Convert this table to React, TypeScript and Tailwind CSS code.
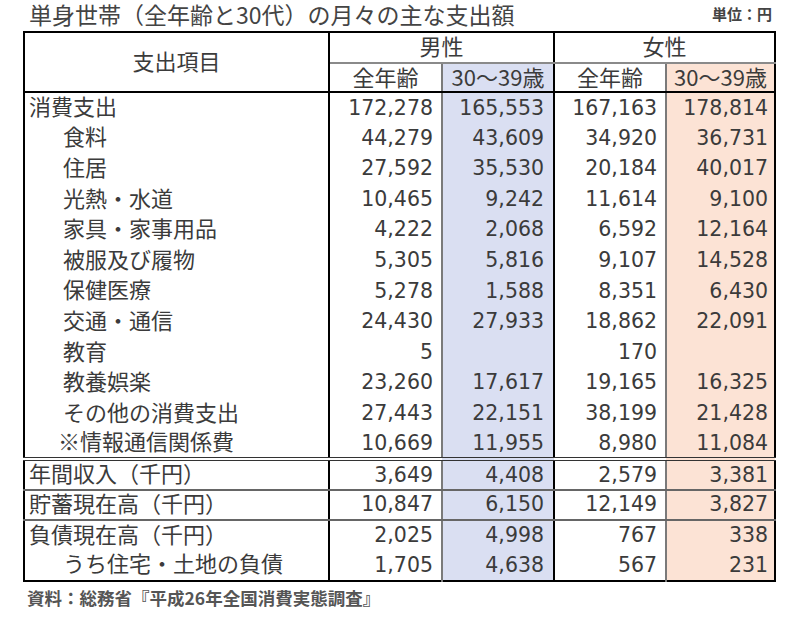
import React from "react";

type Row = {
  label: string;
  indent?: number;
  v: [string, string, string, string];
};

const rows: Row[] = [
  { label: "消費支出", v: ["172,278", "165,553", "167,163", "178,814"] },
  { label: "食料", indent: 1, v: ["44,279", "43,609", "34,920", "36,731"] },
  { label: "住居", indent: 1, v: ["27,592", "35,530", "20,184", "40,017"] },
  { label: "光熱・水道", indent: 1, v: ["10,465", "9,242", "11,614", "9,100"] },
  { label: "家具・家事用品", indent: 1, v: ["4,222", "2,068", "6,592", "12,164"] },
  { label: "被服及び履物", indent: 1, v: ["5,305", "5,816", "9,107", "14,528"] },
  { label: "保健医療", indent: 1, v: ["5,278", "1,588", "8,351", "6,430"] },
  { label: "交通・通信", indent: 1, v: ["24,430", "27,933", "18,862", "22,091"] },
  { label: "教育", indent: 1, v: ["5", "", "170", ""] },
  { label: "教養娯楽", indent: 1, v: ["23,260", "17,617", "19,165", "16,325"] },
  { label: "その他の消費支出", indent: 1, v: ["27,443", "22,151", "38,199", "21,428"] },
  { label: "※情報通信関係費", indent: 2, v: ["10,669", "11,955", "8,980", "11,084"] },
];

const rows2: Row[] = [
  { label: "年間収入（千円）", v: ["3,649", "4,408", "2,579", "3,381"] },
  { label: "貯蓄現在高（千円）", v: ["10,847", "6,150", "12,149", "3,827"] },
  { label: "負債現在高（千円）", v: ["2,025", "4,998", "767", "338"] },
  { label: "うち住宅・土地の負債", indent: 1, v: ["1,705", "4,638", "567", "231"] },
];

const BLUE = "bg-[#dadff2]";
const PEACH = "bg-[#fce3d5]";
const JP = { fontFamily: '"Noto Sans CJK JP", sans-serif' };

function DataRow({ r, h, bottom }: { r: Row; h: string; bottom: string }) {
  const pad = r.indent === 1 ? "pl-[38px]" : r.indent === 2 ? "pl-[33px]" : "pl-[4px]";
  return (
    <tr className={h}>
      <td className={`${pad} pb-[5px] border-r-2 border-black ${bottom} whitespace-nowrap text-[22px]`} style={JP}>
        {r.label}
      </td>
      <td className={`pr-[8px] text-right border-r-2 border-[#7a7a7a] ${bottom}`}>{r.v[0]}</td>
      <td className={`pr-[9px] text-right border-r-2 border-black ${BLUE} ${bottom}`}>{r.v[1]}</td>
      <td className={`pr-[8px] text-right border-r-2 border-[#7a7a7a] ${bottom}`}>{r.v[2]}</td>
      <td className={`pr-[6px] text-right ${PEACH} ${bottom}`}>{r.v[3]}</td>
    </tr>
  );
}

export default function App() {
  return (
    <div
      className="w-[800px] h-[622px] bg-white text-[#3b3b3b] overflow-hidden"
      style={{ fontFamily: '"DejaVu Sans", "Noto Sans CJK JP", sans-serif' }}
    >
      <div className="flex items-start justify-between h-[31px] pl-[29px] pr-[28px]">
        <div className="text-[23px] leading-[28px] text-[#444]" style={JP}>
          単身世帯（全年齢と30代）の月々の主な支出額
        </div>
        <div className="text-[15px] font-bold leading-[28px] text-[#444]" style={JP}>
          単位：円
        </div>
      </div>
      <table className="ml-[23px] w-[751px] table-fixed border-collapse border-2 border-black text-[20.5px] leading-none">
        <colgroup>
          <col className="w-[305px]" />
          <col className="w-[113px]" />
          <col className="w-[112px]" />
          <col className="w-[112px]" />
          <col className="w-[109px]" />
        </colgroup>
        <tbody>
          <tr className="h-[31px]">
            <td rowSpan={2} className="text-center pb-[5px] border-r-2 border-b-2 border-black text-[22px]" style={JP}>
              支出項目
            </td>
            <td colSpan={2} className="text-center pb-[5px] border-r-2 border-black border-b-2 border-b-[#8a8a8a] text-[22px]" style={JP}>
              男性
            </td>
            <td colSpan={2} className="text-center pb-[5px] border-b-2 border-b-[#8a8a8a] text-[22px]" style={JP}>
              女性
            </td>
          </tr>
          <tr className="h-[29px] text-[22px]">
            <td className="text-center pb-[4px] border-r-2 border-[#7a7a7a] border-b-2 border-b-black" style={JP}>全年齢</td>
            <td className={`text-center pb-[4px] border-r-2 border-black border-b-2 ${BLUE}`} style={JP}>30～39歳</td>
            <td className="text-center pb-[4px] border-r-2 border-[#7a7a7a] border-b-2 border-b-black" style={JP}>全年齢</td>
            <td className={`text-center pb-[4px] border-b-2 border-black ${PEACH}`} style={JP}>30～39歳</td>
          </tr>
          {rows.map((r, i) => (
            <DataRow
              key={r.label}
              r={r}
              h="h-[30.6px]"
              bottom={i === rows.length - 1 ? "border-b-[4px] border-double border-b-[#333]" : ""}
            />
          ))}
          {rows2.map((r, i) => (
            <DataRow
              key={r.label}
              r={r}
              h="h-[30.4px]"
              bottom={i < 2 ? "border-b-2 border-b-[#666]" : ""}
            />
          ))}
        </tbody>
      </table>
      <div className="pl-[27px] pt-[5px] text-[17.5px] font-bold leading-[21px] text-[#555]" style={JP}>
        資料：総務省『平成26年全国消費実態調査』
      </div>
    </div>
  );
}
